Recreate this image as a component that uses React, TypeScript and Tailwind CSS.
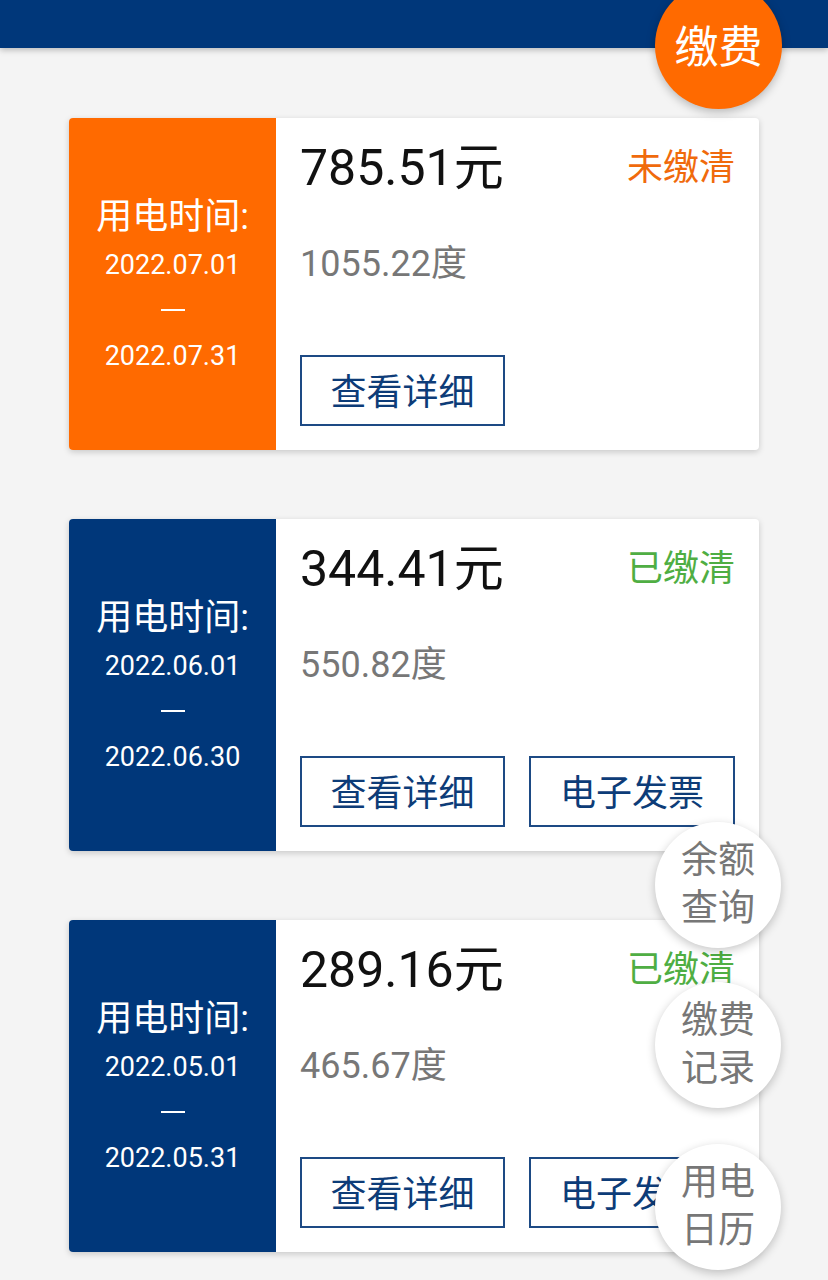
import React from "react";

type Bill = {
  start: string;
  end: string;
  amount: string;
  kwh: string;
  paid: boolean;
};

const bills: Bill[] = [
  { start: "2022.07.01", end: "2022.07.31", amount: "785.51元", kwh: "1055.22度", paid: false },
  { start: "2022.06.01", end: "2022.06.30", amount: "344.41元", kwh: "550.82度", paid: true },
  { start: "2022.05.01", end: "2022.05.31", amount: "289.16元", kwh: "465.67度", paid: true },
];

const font = { fontFamily: '"Roboto", "Noto Sans CJK SC", sans-serif' };

function Card({ bill }: { bill: Bill }) {
  return (
    <div className="flex h-[332px] w-[690px] overflow-hidden rounded-[4px] bg-white shadow-[0_2px_6px_rgba(0,0,0,0.18)]">
      <div
        className={`flex w-[207px] shrink-0 flex-col items-center pt-[75px] text-white ${
          bill.paid ? "bg-[#00377a]" : "bg-[#ff6a00]"
        }`}
      >
        <div className="text-[36px] leading-[48px]">用电时间:</div>
        <div className="text-[27px] leading-[48px]">{bill.start}</div>
        <div className="flex h-[42px] items-center">
          <div className="h-[2px] w-[24px] bg-white" />
        </div>
        <div className="text-[27px] leading-[50px]">{bill.end}</div>
      </div>
      <div className="flex flex-1 flex-col pl-[24px] pr-[24px] pt-[20px]">
        <div className="flex items-center justify-between">
          <div className="text-[50px] leading-[60px] text-[#111]">{bill.amount}</div>
          <div
            className={`text-[36px] leading-[60px] ${
              bill.paid ? "text-[#4fae43]" : "text-[#f06a0c]"
            }`}
          >
            {bill.paid ? "已缴清" : "未缴清"}
          </div>
        </div>
        <div className="mt-[44px] text-[36px] leading-[44px] text-[#777]">{bill.kwh}</div>
        <div className="mt-[69px] flex gap-[24px]">
          <div className="flex h-[71px] w-[205px] items-center justify-center border-2 border-[#1d4a84] pt-[4px] text-[36px] text-[#0d3c78]">
            查看详细
          </div>
          {bill.paid && (
            <div className="flex h-[71px] w-[206px] items-center justify-center border-2 border-[#1d4a84] pt-[4px] text-[36px] text-[#0d3c78]">
              电子发票
            </div>
          )}
        </div>
      </div>
    </div>
  );
}

function Float({ top, lines }: { top: number; lines: string[] }) {
  return (
    <div
      className="absolute left-[655px] flex h-[126px] w-[126px] flex-col items-center justify-center rounded-full bg-white text-[37px] leading-[48px] text-[#777] shadow-[0_3px_10px_rgba(0,0,0,0.22)]"
      style={{ top }}
    >
      {lines.map((l) => (
        <div key={l}>{l}</div>
      ))}
    </div>
  );
}

export default function App() {
  return (
    <div className="relative min-h-[1280px] overflow-hidden bg-[#f4f4f4]" style={font}>
      <div className="h-[48px] bg-[#00377a] shadow-[0_2px_6px_rgba(0,0,0,0.25)]" />
      <div className="flex flex-col gap-[69px] pl-[69px] pt-[70px] pb-[40px]">
        {bills.map((b) => (
          <Card key={b.start} bill={b} />
        ))}
      </div>
      <div className="absolute left-[655px] top-[-18px] flex h-[127px] w-[127px] items-center justify-center rounded-full bg-[#ff6a00] pt-[4px] text-[44px] text-white shadow-[0_3px_10px_rgba(0,0,0,0.25)]">
        缴费
      </div>
      <Float top={822} lines={["余额", "查询"]} />
      <Float top={982} lines={["缴费", "记录"]} />
      <Float top={1144} lines={["用电", "日历"]} />
    </div>
  );
}
